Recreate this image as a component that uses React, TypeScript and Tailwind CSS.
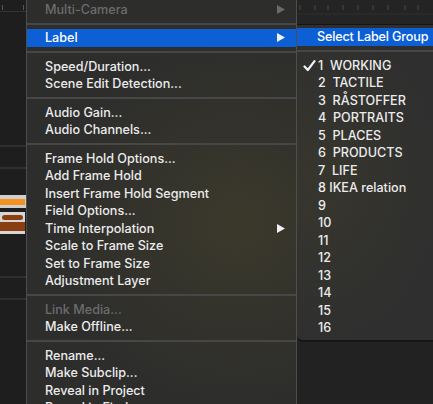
import React from 'react';

type Item =
  | { kind: 'sep' }
  | { kind: 'item'; label: string; disabled?: boolean; active?: boolean; arrow?: boolean };

const mainItems: Item[] = [
  { kind: 'item', label: 'Multi-Camera', disabled: true, arrow: true },
  { kind: 'sep' },
  { kind: 'item', label: 'Label', active: true, arrow: true },
  { kind: 'sep' },
  { kind: 'item', label: 'Speed/Duration...' },
  { kind: 'item', label: 'Scene Edit Detection...' },
  { kind: 'sep' },
  { kind: 'item', label: 'Audio Gain...' },
  { kind: 'item', label: 'Audio Channels...' },
  { kind: 'sep' },
  { kind: 'item', label: 'Frame Hold Options...' },
  { kind: 'item', label: 'Add Frame Hold' },
  { kind: 'item', label: 'Insert Frame Hold Segment' },
  { kind: 'item', label: 'Field Options...' },
  { kind: 'item', label: 'Time Interpolation', arrow: true },
  { kind: 'item', label: 'Scale to Frame Size' },
  { kind: 'item', label: 'Set to Frame Size' },
  { kind: 'item', label: 'Adjustment Layer' },
  { kind: 'sep' },
  { kind: 'item', label: 'Link Media...', disabled: true },
  { kind: 'item', label: 'Make Offline...' },
  { kind: 'sep' },
  { kind: 'item', label: 'Rename...' },
  { kind: 'item', label: 'Make Subclip...' },
  { kind: 'item', label: 'Reveal in Project' },
  { kind: 'item', label: 'Reveal in Finder...' },
];

const labels = [
  '1  WORKING',
  '2  TACTILE',
  '3  RÅSTOFFER',
  '4  PORTRAITS',
  '5  PLACES',
  '6  PRODUCTS',
  '7  LIFE',
  '8 IKEA relation',
  '9',
  '10',
  '11',
  '12',
  '13',
  '14',
  '15',
  '16',
];

const Arrow = ({ dim }: { dim?: boolean }) => (
  <svg width="8" height="9" viewBox="0 0 8 9" className="absolute right-[11px] top-[4px]">
    <path d="M0 0 L8 4.5 L0 9 Z" fill={dim ? '#6a6a6a' : '#f2f2f2'} />
  </svg>
);

const Separator = () => (
  <div className="h-[11px] shrink-0 flex items-center">
    <div className="h-[2px] w-full bg-[#474747]" />
  </div>
);

const Check = () => (
  <svg width="13" height="12" viewBox="0 0 13 12" className="absolute left-[6px] top-[3px]">
    <path d="M1.5 6.5 L4.8 10 L11.5 1.2" stroke="#f2f2f2" strokeWidth="2.2" fill="none" strokeLinecap="round" strokeLinejoin="round" />
  </svg>
);

const LeftStrip = () => (
  <div className="w-[26px] shrink-0 h-full bg-[#1e1e1e] flex flex-col">
    <div className="h-[12px] shrink-0 border-b border-[#333] flex justify-between px-[2px] pt-[5px]">
      <div className="w-px h-[5px] bg-[#555]" />
      <div className="w-px h-[5px] bg-[#555]" />
    </div>
    <div className="h-[135px] shrink-0 border-b-2 border-[#2f2f2f]" />
    <div className="h-[22px] shrink-0 border-b-2 border-[#2f2f2f]" />
    <div className="h-[26px] shrink-0" />
    <div className="h-[13px] shrink-0 bg-[#cfcfcf] pr-[1px] flex items-center">
      <div className="h-[6px] w-full bg-[#f5921f]" />
    </div>
    <div className="h-[4px] shrink-0" />
    <div className="h-[22px] shrink-0 bg-[#d6d6d6] mr-[1px] flex flex-col justify-center gap-[2px]">
      <div className="h-[5px] w-[21px] bg-[#8a3f12] ml-[2px] rounded-sm" />
      <div className="h-[9px] w-[25px] bg-[#8a3f12]" />
    </div>
    <div className="h-[44px] shrink-0 border-b-2 border-[#2f2f2f]" />
    <div className="h-[22px] shrink-0 border-b-2 border-[#2f2f2f]" />
  </div>
);

const TopRuler = () => (
  <div className="h-[25px] shrink-0 bg-[#242424] border-b border-[#151515]">
    <svg width="136" height="24" viewBox="0 0 136 24">
      <line x1="0" y1="14" x2="136" y2="14" stroke="#2e2e2e" />
      {[3, 18, 31, 46, 61, 76, 91, 108, 121].map((x) => (
        <line key={x} x1={x} y1="5" x2={x} y2="10" stroke="#4a4a4a" strokeWidth="1" />
      ))}
    </svg>
  </div>
);

export default function App() {
  const font = { fontFamily: 'Inter, "Liberation Sans", Arial, sans-serif' };
  return (
    <div className="w-[433px] h-[404px] overflow-hidden flex bg-[#1e1e1e] text-[12.6px]" style={font}>
      <LeftStrip />

      {/* Main context menu */}
      <div className="w-[271px] shrink-0 h-full border-l border-r border-[#4e4e4e] bg-[radial-gradient(ellipse_70%_45%_at_78%_55%,#3b392b,#2d2d2c)] flex flex-col">
        <div className="h-[0.5px] shrink-0" />
        {mainItems.map((it, i) =>
          it.kind === 'sep' ? (
            <Separator key={i} />
          ) : (
            <div
              key={i}
              className={
                'relative h-[17.5px] shrink-0 leading-[17.5px] pl-[18px] font-medium whitespace-nowrap ' +
                (it.active ? 'bg-[#0c5fd4] text-white ' : '') +
                (it.disabled ? 'text-[#6c6c6c]' : 'text-[#ececec]')
              }
            >
              {it.label}
              {it.arrow && <Arrow dim={it.disabled} />}
            </div>
          )
        )}
      </div>

      {/* Right column with submenu */}
      <div className="flex-1 h-full flex flex-col bg-[#222222]">
        <TopRuler />
        <div className="h-[317px] shrink-0 bg-[radial-gradient(ellipse_90%_50%_at_15%_50%,#37362d,#2f2f2f)] border-b-2 border-[#161616] rounded-bl-[6px] flex flex-col pt-[3px]">
          <div className="h-[17.5px] shrink-0 leading-[17.5px] bg-[#0c5fd4] text-white pl-[20px] font-medium whitespace-nowrap tracking-[-0.15px]">
            Select Label Group
          </div>
          <Separator />
          {labels.map((l, i) => (
            <div key={l} className="relative h-[17.5px] shrink-0 leading-[17.5px] pl-[21px] text-[#ececec] font-medium whitespace-pre">
              {i === 0 && <Check />}
              {l}
            </div>
          ))}
        </div>
      </div>
    </div>
  );
}
